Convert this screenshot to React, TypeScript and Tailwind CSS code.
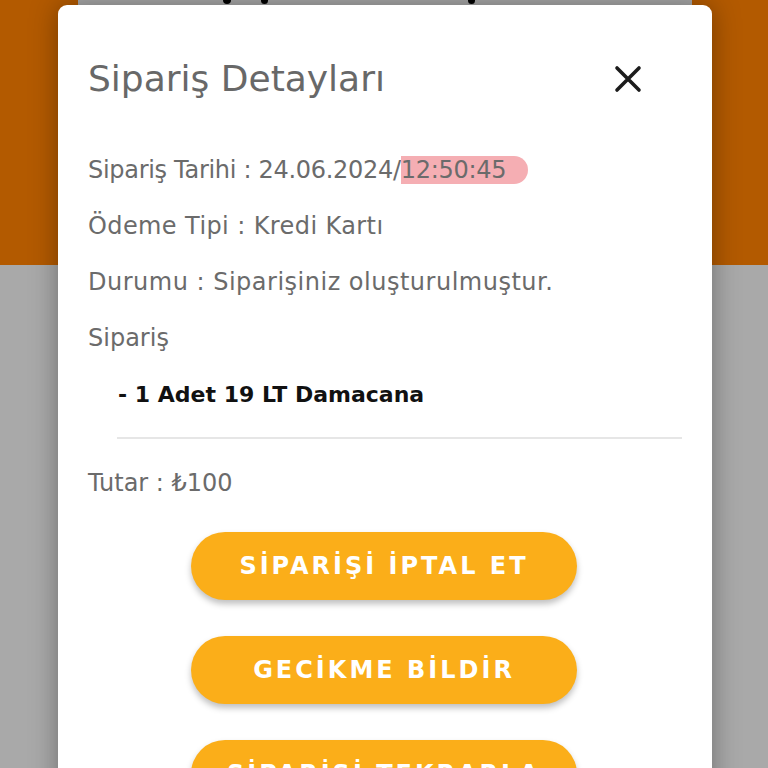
import React from 'react';

const FONT = { fontFamily: '"DejaVu Sans", "Liberation Sans", sans-serif' };

const ROWS = [
  { text: 'Ödeme Tipi : Kredi Kartı', cls: 'tracking-[0.4px]' },
  { text: 'Durumu : Siparişiniz oluşturulmuştur.', cls: 'tracking-[0.5px]' },
  { text: 'Sipariş', cls: '' },
];

const ACTIONS = ['SİPARİŞİ İPTAL ET', 'GECİKME BİLDİR', 'SİPARİŞİ TEKRARLA'];

function CloseIcon() {
  return (
    <svg width="28" height="28" viewBox="0 0 28 28" fill="none">
      <path d="M3 3 L25 25 M25 3 L3 25" stroke="#1c1c1c" strokeWidth="3.6" strokeLinecap="round" />
    </svg>
  );
}

export default function App() {
  return (
    <div className="relative w-[768px] h-[768px] overflow-hidden bg-[#a9a9a9]" style={FONT}>
      {/* dimmed page behind the dialog */}
      <div className="h-[265px] bg-[#b35a00]" />

      {/* header card peeking out above the dialog */}
      <div className="absolute left-[78px] top-0 w-[614px] h-[6px] bg-[#a9a9a9] flex items-start gap-[30px] pl-[145px]">
        <span className="block w-[8px] h-[4px] bg-black rounded-b-sm" />
        <span className="block w-[7px] h-[4px] bg-black rounded-b-sm" />
        <span className="block w-[7px] h-[4px] bg-black rounded-b-sm ml-[170px]" />
      </div>

      {/* dialog */}
      <div className="absolute left-[58px] top-[5px] w-[654px] h-[800px] bg-white rounded-[9px] shadow-[0_0_28px_rgba(0,0,0,0.35)]">
        <div className="pt-[52px] pl-[30px] pr-[70px] flex items-center justify-between">
          <h2 className="text-[36px] leading-[44px] font-normal text-[#686868]">
            Sipariş Detayları
          </h2>
          <button className="w-[28px] h-[28px] flex items-center justify-center">
            <CloseIcon />
          </button>
        </div>

        <div className="mt-[41px] pl-[30px] pr-[30px] text-[24px] text-[#6b6b6b]">
          <div className="h-[56px] flex items-center tracking-[-0.3px]">
            <span>Sipariş Tarihi : 24.06.2024/</span>
            <span className="bg-[#f5aeb3] rounded-r-full pr-[22px] leading-[28px]">12:50:45</span>
          </div>
          {ROWS.map((row) => (
            <div key={row.text} className={`h-[56px] flex items-center ${row.cls}`}>
              {row.text}
            </div>
          ))}
          <div className="h-[56px] flex items-center pl-[30px] text-[22px] text-[#111] font-semibold">
            - 1 Adet 19 LT Damacana
          </div>
          <div className="mt-[15px] ml-[29px] h-[2px] bg-[#e6e6e6]" />
          <div className="mt-[16px] h-[56px] flex items-center">Tutar : ₺100</div>
        </div>

        <div className="mt-[21px] flex flex-col items-center gap-[36px] pr-[2px]">
          {ACTIONS.map((label) => (
            <button
              key={label}
              className="w-[386px] h-[68px] rounded-full bg-[#fbae19] text-white text-[24px] font-bold tracking-[3px] shadow-[0_4px_6px_rgba(0,0,0,0.25)]"
            >
              {label}
            </button>
          ))}
        </div>
      </div>
    </div>
  );
}
